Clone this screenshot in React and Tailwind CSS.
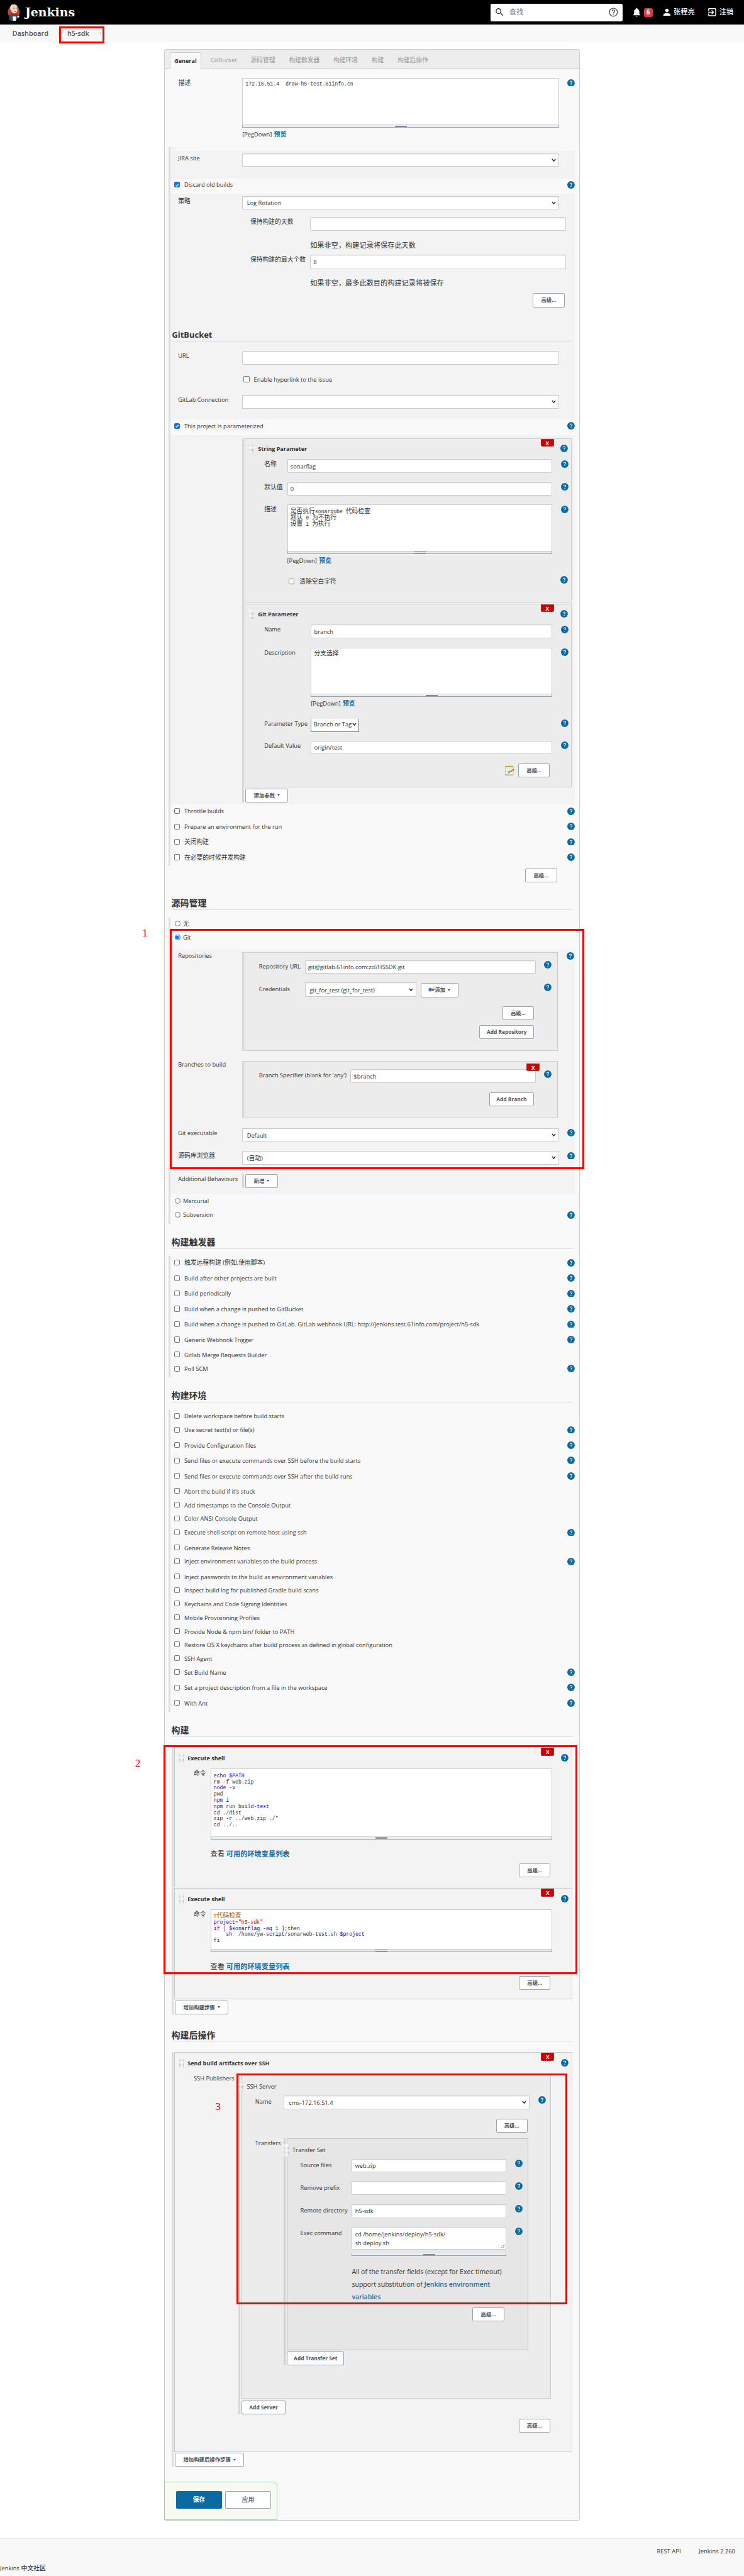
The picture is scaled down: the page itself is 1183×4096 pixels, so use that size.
import React from "react";
import { MdSearch, MdHelpOutline, MdNotifications, MdPerson, MdExitToApp } from "react-icons/md";

const hasCjk = (s) => /[\u4e00-\u9fff]/.test(s);

function Text({ children, className = "" }) {
  return (
    <span className={`${hasCjk(children) ? "text-[14px]" : "text-[13.3px]"} whitespace-nowrap leading-6 ${className}`}>
      {children}
    </span>
  );
}

function Help({ className = "" }) {
  return (
    <svg viewBox="0 0 17 17" className={`h-[17px] w-[17px] shrink-0 ${className}`}>
      <circle cx="8.5" cy="8.5" r="8.5" fill="#0b6aa2" />
      <path d="M6.1 6.6c0-1.5 1-2.4 2.4-2.4s2.4.9 2.4 2.1c0 1.7-2.3 1.9-2.3 3.7" fill="none" stroke="#fff" strokeWidth="1.5" />
      <rect x="7.8" y="11.3" width="1.6" height="1.7" fill="#fff" />
    </svg>
  );
}

function Check({ on, className = "" }) {
  return (
    <span
      className={`flex h-[13px] w-[13px] shrink-0 items-center justify-center rounded-[2.5px] border ${on ? "border-[#0075ff] bg-[#0075ff]" : "border-[#767676] bg-white"} ${className}`}
    >
      {on && (
        <svg viewBox="0 0 12 12" className="h-[12px] w-[12px]">
          <path d="M2 6.2l2.8 2.9L10 2.8" fill="none" stroke="#fff" strokeWidth="2" />
        </svg>
      )}
    </span>
  );
}

function CheckRow({ label, help, on, className = "" }) {
  return (
    <div className={`flex w-[920px] items-start pl-[9px] ${help ? "h-[35px]" : "h-[31px]"} ${className}`}>
      <Check on={on} className={help ? "mt-[8px]" : "mt-[7px]"} />
      <Text className="mt-[4px] ml-[10px]">{label}</Text>
      {help && <Help className="mt-[6px] mr-px ml-auto" />}
    </div>
  );
}

function RadioRow({ label, help, on }) {
  return (
    <div className={`flex w-[920px] items-start pl-[10px] ${help ? "h-[35px]" : "h-[31px]"}`}>
      <span className={`mt-[8px] flex h-[13px] w-[13px] shrink-0 items-center justify-center rounded-full border bg-white ${on ? "border-[#0075ff]" : "border-[#767676]"}`}>
        {on && <span className="h-[8px] w-[8px] rounded-full bg-[#0075ff]" />}
      </span>
      <Text className="mt-[4px] ml-[6px]">{label}</Text>
      {help && <Help className="mt-[7px] mr-px ml-auto" />}
    </div>
  );
}

function Label({ children, className = "" }) {
  return (
    <div className={`shrink-0 leading-6 ${className}`}>
      <Text className="block">{children}</Text>
    </div>
  );
}

function Input({ children, className = "" }) {
  return (
    <div className={`flex h-[31px] shrink-0 items-center rounded-[3px] border border-[#ccc] bg-white pt-[3px] pl-[6px] shadow-[inset_0_1px_1px_rgba(0,0,0,0.08)] ${className}`}>
      {children && <Text>{children}</Text>}
    </div>
  );
}

function Chevron({ className = "" }) {
  return (
    <svg viewBox="0 0 10 8" className={`h-[8px] w-[10px] ${className}`}>
      <path d="M1.2 1.2L5 6l3.8-4.8" fill="none" stroke="#222" strokeWidth="2" />
    </svg>
  );
}

function Select({ children, className = "" }) {
  return (
    <div className={`flex h-[31px] shrink-0 items-center justify-between border border-[#ccc] bg-white pr-[5px] pl-[10px] shadow-[inset_0_1px_1px_rgba(0,0,0,0.08)] ${className}`}>
      <Text className="pt-[4px]">{children || ""}</Text>
      <Chevron />
    </div>
  );
}

function Btn({ children, className = "" }) {
  return (
    <div className={`flex h-[32px] shrink-0 items-center justify-center rounded-[3px] border-2 border-[#98a5ae] bg-white text-[12px] leading-none font-bold whitespace-nowrap text-[#4d545d] ${className}`}>
      {children}
    </div>
  );
}

function Caret() {
  return <span className="ml-[6px] border-x-4 border-t-[5px] border-x-transparent border-t-[#4d545d]" />;
}

function Grip({ className = "" }) {
  return (
    <div className={`flex h-[6px] flex-col items-center justify-center gap-[1px] border border-t-0 border-[#95a5b0] bg-[#e8eef1] ${className}`}>
      <span className="h-[1px] w-[27px] bg-[#889]" />
      <span className="h-[1px] w-[27px] bg-[#889]" />
    </div>
  );
}

function Area({ children, className = "" }) {
  return (
    <div>
      <div className={`overflow-hidden border border-[#ccc] bg-white pl-[6px] [font-family:'Liberation_Mono','Noto_Sans_CJK_SC',monospace] text-[11.67px] leading-[14px] whitespace-pre ${className}`}>
        {children}
      </div>
      <Grip />
    </div>
  );
}

function PegDown() {
  return (
    <div className="mt-[4px] flex h-6 gap-[5px] whitespace-nowrap leading-6">
      <span className="text-[13.3px]">[PegDown]</span>
      <span className="text-[14px] font-bold text-[#0b6aa2]">预览</span>
    </div>
  );
}

function Heading({ children, className = "" }) {
  return (
    <div className={`h-[27px] border-b border-[#ddd] leading-6 font-bold text-[#333] ${hasCjk(children) ? "text-[20px]" : "text-[18.5px]"} ${className}`}>
      {children}
    </div>
  );
}

function Handle({ className = "" }) {
  return (
    <svg className={`w-[12px] shrink-0 ${className}`}>
      <defs>
        <pattern id="grip-dots" width="3" height="3" patternUnits="userSpaceOnUse">
          <rect width="3" height="3" fill="#f7f7f7" />
          <rect x="1" y="1" width="1.4" height="1.4" fill="#aaa" />
        </pattern>
      </defs>
      <rect width="12" height="100%" fill="url(#grip-dots)" />
    </svg>
  );
}

function CloseX({ className = "" }) {
  return (
    <div className={`h-[18px] w-[30px] rounded-b-[3px] border border-[#a33] bg-[#c00] text-center text-[12px] leading-[17px] font-bold text-white ${className}`}>
      X
    </div>
  );
}

function CardHead({ title }) {
  return (
    <div className="flex h-[47px] items-start">
      <Handle className="mt-[13px] ml-[9px] h-[21px]" />
      <span className="mt-[12px] ml-[8px] text-[13px] leading-6 font-bold whitespace-nowrap">{title}</span>
      <CloseX className="ml-auto" />
      <Help className="mt-[14px] mr-[7px] ml-[15px]" />
    </div>
  );
}

const Cmd = ({ children }) => <span className="text-[#3300aa]">{children}</span>;
const Var = ({ children }) => <span className="text-[#0000e0]">{children}</span>;

function EnvLink() {
  return (
    <div className="mt-[21px] text-[16px] leading-6 whitespace-nowrap">
      查看 <span className="font-bold text-[#0b6aa2]">可用的环境变量列表</span>
    </div>
  );
}

const triggers = [
  ["触发远程构建 (例如,使用脚本)", true],
  ["Build after other projects are built", true],
  ["Build periodically", true],
  ["Build when a change is pushed to GitBucket", true],
  ["Build when a change is pushed to GitLab. GitLab webhook URL: http://jenkins.test.61info.com/project/h5-sdk", true],
  ["Generic Webhook Trigger", true],
  ["Gitlab Merge Requests Builder", false],
  ["Poll SCM", true],
];

const environment = [
  ["Delete workspace before build starts", false],
  ["Use secret text(s) or file(s)", true],
  ["Provide Configuration files", true],
  ["Send files or execute commands over SSH before the build starts", true],
  ["Send files or execute commands over SSH after the build runs", true],
  ["Abort the build if it's stuck", false],
  ["Add timestamps to the Console Output", false],
  ["Color ANSI Console Output", false],
  ["Execute shell script on remote host using ssh", true],
  ["Generate Release Notes", false],
  ["Inject environment variables to the build process", true],
  ["Inject passwords to the build as environment variables", false],
  ["Inspect build log for published Gradle build scans", false],
  ["Keychains and Code Signing Identities", false],
  ["Mobile Provisioning Profiles", false],
  ["Provide Node & npm bin/ folder to PATH", false],
  ["Restore OS X keychains after build process as defined in global configuration", false],
  ["SSH Agent", false],
  ["Set Build Name", true],
  ["Set a project description from a file in the workspace", true],
  ["With Ant", true],
];

function Butler() {
  return (
    <svg viewBox="0 0 28 39" className="h-[39px] w-[28px]">
      <ellipse cx="14" cy="19" rx="13.5" ry="15" fill="#d33833" />
      <path d="M5 38c-2-6-2-12 2-16l6 3 7-3c4 2 6 6 6 10l-4 1-2 4-6 2z" fill="#335061" />
      <path d="M7 12C5 5 10 1 15 1s9 4 8 11c0 5-1 8-4 10s-7 1-9-2-2-4-3-8z" fill="#f0d6b7" stroke="#222" strokeWidth=".8" />
      <path d="M6.500 14C4 7 8 1 13 1c-3 2-4 5-3.500 9L9 15z" fill="#dfd8cf" />
      <path d="M13 10h3M18.500 10h3M15 17q3 1.500 5 0" stroke="#333" strokeWidth="1.100" fill="none" />
      <path d="M12 21l5 2 5-2v5l-5-2-5 2z" fill="#d33833" stroke="#7a1512" strokeWidth=".6" />
      <path d="M11.500 29h8l-.8 10h-6z" fill="#fff" />
      <path d="M22 27h5l-1 4h-4z" fill="#ddd" />
    </svg>
  );
}

function Header() {
  return (
    <>
      <div className="flex h-[56px] items-center bg-black pl-[17px] text-white">
        <Butler />
        <span className="ml-[12px] [font-family:'DejaVu_Serif',serif] text-[27px] leading-none font-bold">Jenkins</span>
        <div className="ml-auto flex h-[40px] w-[300px] items-center rounded-[4px] bg-white pr-[9px] pl-[8px]">
          <MdSearch className="h-[24px] w-[24px] text-[#333]" />
          <span className="ml-[11px] text-[16px] text-[#757575]">查找</span>
          <MdHelpOutline className="ml-auto h-[24px] w-[24px] text-[#4d545d]" />
        </div>
        <MdNotifications className="ml-[20px] h-[24px] w-[24px]" />
        <span className="ml-[4px] h-[20px] w-[20px] rounded-[4px] bg-[#dc3545] text-center text-[14px] leading-[20px] font-bold">6</span>
        <MdPerson className="ml-[21px] h-[24px] w-[24px]" />
        <span className="ml-[3px] w-[48px] text-[16px] font-medium whitespace-nowrap">张程亮</span>
        <MdExitToApp className="ml-[28px] h-[24px] w-[24px]" />
        <span className="mr-[24px] ml-[4px] w-[32px] text-[16px] font-medium whitespace-nowrap">注销</span>
      </div>
      <div className="flex h-[40px] items-center bg-[#f8f8f8] pl-[28px] text-[15.5px] font-semibold text-[#4d545d]">
        <span className="w-[81px]">Dashboard</span>
        <span className="ml-[24px] border-y-4 border-l-4 border-y-transparent border-l-[#bbb]" />
        <span className="ml-[17px] w-[51px]">h5-sdk</span>
        <span className="ml-[24px] border-y-4 border-l-4 border-y-transparent border-l-[#bbb]" />
      </div>
    </>
  );
}

function Tabs() {
  return (
    <div className="flex h-[45px] items-end border-b border-[#ccc] bg-[#ededed] pl-[11px] leading-[38px] text-[#999]">
      <span className="-mb-px flex h-[38px] w-[72px] justify-center rounded-t-[4px] border border-b-0 border-[#ccc] bg-[#f9f9f9] text-[13px] font-bold text-[#333]">
        General
      </span>
      <span className="ml-[21px] w-[61px] text-[13.3px]">GitBucket</span>
      <div className="flex gap-[31px] pl-[30px] text-[14px]">
        <span>源码管理</span>
        <span>构建触发器</span>
        <span>构建环境</span>
        <span>构建</span>
        <span>构建后操作</span>
      </div>
    </div>
  );
}

function LogRotation() {
  return (
    <div className="h-[513px] w-[920px] bg-[#f3f3f3] pt-[5px]">
      <div className="flex h-[47px] items-start pl-[18px]">
        <Label className="w-[145px]">策略</Label>
        <Select className="w-[720px]">Log Rotation</Select>
      </div>
      <div className="flex h-[87px] items-start pl-[182px]">
        <Label className="w-[136px]">保持构建的天数</Label>
        <div>
          <Input className="h-[32px] w-[582px]" />
          <div className="mt-[21px] text-[16px] leading-6">如果非空，构建记录将保存此天数</div>
        </div>
      </div>
      <div className="flex h-[87px] items-start pl-[182px]">
        <Label className="w-[136px]">保持构建的最大个数</Label>
        <div>
          <Input className="h-[32px] w-[582px]">8</Input>
          <div className="mt-[21px] text-[16px] leading-6">如果非空，最多此数目的构建记录将被保存</div>
        </div>
      </div>
      <div className="flex h-[82px] justify-end pr-[24px]">
        <Btn className="w-[72px]">高级...</Btn>
      </div>
      <Heading className="ml-[4px] w-[911px]">GitBucket</Heading>
      <div className="mt-[22px] flex h-[55px] items-start pl-[18px]">
        <Label className="w-[145px]">URL</Label>
        <Input className="w-[720px]" />
      </div>
      <div className="flex h-[45px] items-start pl-[167px]">
        <Check className="mt-[3px]" />
        <Text className="ml-[10px]">Enable hyperlink to the issue</Text>
      </div>
      <div className="flex h-[31px] items-start pl-[18px]">
        <Label className="w-[145px]">GitLab Connection</Label>
        <Select className="w-[720px]" />
      </div>
    </div>
  );
}

function ParamRow({ label, wide, children, className = "" }) {
  return (
    <div className={`flex items-start pl-[43px] ${className}`}>
      <Label className={wide ? "w-[106px]" : "w-[52px]"}>{label}</Label>
      <div className={wide ? "w-[548px]" : "w-[602px]"}>{children}</div>
      <Help className="mt-[2px] ml-[20px]" />
    </div>
  );
}

function Notepad() {
  return (
    <svg viewBox="0 0 24 24" className="h-[24px] w-[24px]">
      <rect x="2" y="2" width="18" height="20" fill="#fafafa" stroke="#aaa" />
      <rect x="2" y="1" width="18" height="3.5" fill="#c9ad3a" />
      <path d="M5 8h12M5 11h12M5 14h8" stroke="#bbb" strokeWidth="1.200" />
      <path d="M8 18.500l1.500-3.500 9.500-6 1.500 2.200-9.500 6z" fill="#e8a33a" stroke="#8a5a1a" strokeWidth=".7" />
      <path d="M19 9l2-1.200 1.500 2.200-2 1.200z" fill="#d0402b" />
      <rect x="2" y="20.500" width="18" height="2" fill="#aaa" />
    </svg>
  );
}

function Parameters() {
  return (
    <div className="h-[840px] w-[920px] bg-[#f3f3f3] pt-[7px] pl-[163px]">
      <div className="flex h-[828px] flex-col border-l-[5px] border-[#d8d8d8] pl-[2px]">
        <div className="h-[374px] w-[743px] shrink-0 border border-[#ccc] bg-[#ececec]">
          <CardHead title="String Parameter" />
          <ParamRow label="名称" className="h-[52px]"><Input>sonarflag</Input></ParamRow>
          <ParamRow label="默认值" className="h-[51px]"><Input>0</Input></ParamRow>
          <ParamRow label="描述" className="h-[161px]">
            <Area className="h-[106px] pt-[8px]">
              <span className="text-[14px]">是否执行</span>sonarqube <span className="text-[14px]">代码检查</span>{"\n"}
              <span className="text-[14px]">默认</span> 0 <span className="text-[14px]">为不执行</span>{"\n"}
              <span className="text-[14px]">设置</span> 1 <span className="text-[14px]">为执行</span>
            </Area>
            <PegDown />
          </ParamRow>
          <div className="flex items-start pl-[99px]">
            <Check className="mt-[7px]" />
            <Text className="mt-[3px] ml-[11px]">清除空白字符</Text>
            <Help className="mt-[1px] mr-[7px] ml-auto" />
          </div>
        </div>
        <div className="mt-[2px] h-[418px] w-[743px] shrink-0 border border-[#ccc] bg-[#ececec]">
          <CardHead title="Git Parameter" />
          <ParamRow wide label="Name" className="h-[52px]"><Input>branch</Input></ParamRow>
          <ParamRow wide label="Description" className="h-[161px]">
            <Area className="h-[106px] pt-[6px]"><span className="text-[14px]">分支选择</span></Area>
            <PegDown />
          </ParamRow>
          <ParamRow wide label="Parameter Type" className="h-[50px]">
            <div className="flex h-[30px] w-[109px] items-center justify-between border border-t-0 border-[#767676] bg-white pr-[4px] pl-[5px]">
              <Text>Branch or Tag</Text>
              <Chevron className="-mt-[2px]" />
            </div>
          </ParamRow>
          <ParamRow wide label="Default Value" className="h-[52px]"><Input>origin/test</Input></ParamRow>
          <div className="flex justify-end gap-[8px] pr-[48px]">
            <div className="pt-[4px]"><Notepad /></div>
            <Btn className="w-[72px]">高级...</Btn>
          </div>
        </div>
        <Btn className="mt-[2px] ml-[2px] w-[97px]">添加参数<Caret /></Btn>
      </div>
    </div>
  );
}

function KeyIcon() {
  return (
    <svg viewBox="0 0 16 16" className="h-[15px] w-[15px]">
      <path d="M1 6c0-2 1.500-3 3.500-3 2 0 3 1 3.500 2h7v3h-2v2h-3V9H8c-.5 1.500-1.500 2-3.500 2C2 11 1 9 1 6z" fill="#4f7cae" stroke="#35618f" strokeWidth=".7" />
      <circle cx="12.500" cy="3.500" r="2.500" fill="#f5e04a" />
    </svg>
  );
}

function GitBlock() {
  return (
    <>
      <div className="h-[10px] w-[13px] bg-[#f3f3f3]" />
      <div className="h-[558px] w-[920px] bg-[#f3f3f3] pt-[7px] pl-[18px]">
        <div className="flex h-[248px] items-start">
          <Label className="-mt-[3px] w-[145px]">Repositories</Label>
          <div className="h-[224px] border-l-[5px] border-[#d8d8d8] pl-[2px]">
            <div className="h-full w-[711px] border border-[#ccc] bg-[#ececec] pt-[17px] pl-[31px]">
              <div className="flex h-[51px] w-[665px] items-start">
                <Label className="w-[104px] pt-[3px]">Repository URL</Label>
                <Input className="w-[525px]">git@gitlab.61info.com:zcl/H5SDK.git</Input>
                <Help className="mt-[2px] ml-auto" />
              </div>
              <div className="flex h-[53px] w-[665px] items-start">
                <Label className="w-[104px] pt-[3px]">Credentials</Label>
                <Select className="h-[32px] w-[253px]">git_for_test (git_for_test)</Select>
                <Btn className="mt-px ml-[10px] w-[86px]"><KeyIcon />添加<Caret /></Btn>
                <Help className="mt-[2px] ml-auto" />
              </div>
              <div className="flex w-[625px] flex-col items-end gap-[11px]">
                <Btn className="w-[72px]">高级...</Btn>
                <Btn className="w-[124px]">Add Repository</Btn>
              </div>
            </div>
          </div>
          <Help className="ml-[21px]" />
        </div>
        <div className="flex h-[152px] items-start">
          <Label className="-mt-[3px] w-[145px]">Branches to build</Label>
          <div className="h-[130px] border-l-[5px] border-[#d8d8d8] pl-[2px]">
            <div className="h-full w-[711px] border border-[#ccc] bg-[#ececec] pt-[17px] pl-[31px]">
              <div className="relative flex h-[52px] w-[665px] items-start">
                <Label className="w-[208px] pt-[3px]">Branch Specifier (blank for 'any')</Label>
                <Input className="w-[421px]">$branch</Input>
                <CloseX className="absolute -top-[14px] left-[608px]" />
                <Help className="mt-[2px] ml-auto" />
              </div>
              <div className="flex w-[625px] justify-end">
                <Btn className="w-[102px]">Add Branch</Btn>
              </div>
            </div>
          </div>
        </div>
        <div className="flex h-[52px] items-start">
          <Label className="w-[145px]">Git executable</Label>
          <Select className="w-[720px]">Default</Select>
          <Help className="mt-[2px] ml-[19px]" />
        </div>
        <div className="flex h-[52px] items-start">
          <Label className="w-[145px]">源码库浏览器</Label>
          <Select className="w-[720px]">(自动)</Select>
          <Help className="mt-[2px] ml-[19px]" />
        </div>
        <div className="flex items-start">
          <Label className="w-[145px]">Additional Behaviours</Label>
          <div className="border-l-[5px] border-[#d8d8d8] pl-[4px]">
            <Btn className="w-[73px]">新增<Caret /></Btn>
          </div>
        </div>
      </div>
    </>
  );
}

function Build() {
  return (
    <div className="mt-[24px] ml-[15px] h-[607px] border-l-[5px] border-[#ddd] pl-[2px]">
      <div className="h-[318px] w-[904px] border border-[#ccc] bg-[#f3f3f3]">
        <CardHead title="Execute shell" />
        <div className="flex items-start pl-[43px]">
          <Label className="w-[38px]">命令</Label>
          <div className="w-[777px]">
            <Area className="h-[155px] pt-[8px]">
              <Cmd>echo</Cmd> <Var>$PATH</Var>{"\n"}
              <Cmd>rm</Cmd> <Var>-f</Var> web.zip{"\n"}
              <Cmd>node</Cmd> <Var>-v</Var>{"\n"}
              pwd{"\n"}
              <Cmd>npm</Cmd> i{"\n"}
              <Cmd>npm</Cmd> run build<Var>-test</Var>{"\n"}
              <Cmd>cd</Cmd> ./dist{"\n"}
              zip <Var>-r</Var> ../web.zip ./*{"\n"}
              <Cmd>cd</Cmd> ../..
            </Area>
            <EnvLink />
            <div className="mt-[9px] flex justify-end pr-[4px]"><Btn className="w-[72px]">高级...</Btn></div>
          </div>
        </div>
      </div>
      <div className="mt-[2px] h-[253px] w-[904px] border border-[#ccc] bg-[#f3f3f3]">
        <CardHead title="Execute shell" />
        <div className="flex items-start pl-[43px]">
          <Label className="w-[38px]">命令</Label>
          <div className="w-[777px]">
            <Area className="h-[91px] pt-[7px]">
              <span className="text-[#a50]">#<span className="text-[14px]">代码检查</span></span>{"\n"}
              <Var>project</Var>=<span className="text-[#a11]">"h5-sdk"</span>{"\n"}
              <span className="text-[#708]">if</span> [ <Var>$sonarflag</Var> <Var>-eq</Var> <span className="text-[#164]">1</span> ];then{"\n"}
              {"    "}<Cmd>sh</Cmd>{"  "}/home/yw<Var>-script</Var>/sonarweb<Var>-test</Var>.sh <Var>$project</Var>{"\n"}
              <span className="text-[#708]">fi</span>
            </Area>
            <EnvLink />
            <div className="mt-[9px] flex justify-end pr-[4px]"><Btn className="w-[72px]">高级...</Btn></div>
          </div>
        </div>
      </div>
      <Btn className="mt-[2px] ml-[2px] w-[121px]">增加构建步骤<Caret /></Btn>
    </div>
  );
}

function TransferRow({ label, children, className = "" }) {
  return (
    <div className={`flex items-start pl-[30px] ${className}`}>
      <Label className="w-[117px] pt-[3px]">{label}</Label>
      <div className="w-[351px]">{children}</div>
      <Help className="mt-[2px] ml-[20px]" />
    </div>
  );
}

function TransferSet() {
  return (
    <div className="h-[482px] w-[549px] border border-[#c4c4c4] bg-[#e6e6e6]">
      <div className="flex h-[46px] items-start">
        <Handle className="mt-[12px] -ml-[8px] h-[29px]" />
        <Text className="mt-[15px] ml-[8px]">Transfer Set</Text>
      </div>
      <TransferRow label="Source files" className="h-[51px]"><Input>web.zip</Input></TransferRow>
      <TransferRow label="Remove prefix" className="h-[52px]"><Input /></TransferRow>
      <TransferRow label="Remote directory" className="h-[51px]"><Input>h5-sdk</Input></TransferRow>
      <TransferRow label="Exec command" className="h-[183px]">
        <div className="flex h-[52px] justify-between rounded-[3px] border border-[#ccc] bg-white pt-[7px] pl-[6px] text-[13.3px] leading-[19px]">
          <div>cd /home/jenkins/deploy/h5-sdk/<br />sh deploy.sh</div>
          <svg viewBox="0 0 10 10" className="mr-px mb-px h-[10px] w-[10px] self-end">
            <path d="M1 9l8-8M5 9l4-4" stroke="#555" strokeWidth="1" />
          </svg>
        </div>
        <Grip className="mt-[9px] h-[5px]" />
        <div className="mt-[22px] text-[15px] leading-[28.5px] whitespace-nowrap">
          All of the transfer fields (except for Exec timeout)<br />
          support substitution of <span className="font-semibold text-[#1f6a9e]">Jenkins environment<br />variables</span>
        </div>
      </TransferRow>
      <div className="flex justify-end pr-[53px]"><Btn className="w-[72px]">高级...</Btn></div>
    </div>
  );
}

function PostBuild() {
  return (
    <div className="mt-[24px] ml-[15px] h-[942px] border-l-[5px] border-[#ddd] pl-[2px]">
      <div className="h-[908px] w-[904px] border border-[#ccc] bg-[#f3f3f3]">
        <CardHead title="Send build artifacts over SSH" />
        <div className="flex h-[784px] items-start pl-[43px]">
          <Label className="w-[101px]">SSH Publishers</Label>
          <div className="mt-[2px] h-[773px] border-l-[5px] border-[#d8d8d8] pl-[2px]">
            <div className="h-[737px] w-[705px] border border-[#ccc] bg-[#ececec]">
              <div className="flex h-[46px] items-start">
                <Handle className="mt-[12px] -ml-[8px] h-[29px]" />
                <Text className="mt-[15px] ml-[8px]">SSH Server</Text>
              </div>
              <div className="flex h-[53px] items-start pl-[31px]">
                <Label className="w-[65px] pt-[3px]">Name</Label>
                <Select className="h-[32px] w-[558px]">cms-172.16.51.4</Select>
                <Help className="mt-[2px] ml-[20px]" />
              </div>
              <div className="flex h-[44px] w-[650px] justify-end"><Btn className="w-[72px]">高级...</Btn></div>
              <div className="flex items-start pl-[31px]">
                <Label className="mt-px w-[65px]">Transfers</Label>
                <div className="border-l-[5px] border-[#d0d0d0] pl-[2px]">
                  <TransferSet />
                  <Btn className="mt-[3px] ml-px w-[130px]">Add Transfer Set</Btn>
                </div>
              </div>
            </div>
            <Btn className="mt-[4px] ml-[2px] w-[99px]">Add Server</Btn>
          </div>
        </div>
        <div className="flex justify-end pr-[48px]"><Btn className="w-[72px]">高级...</Btn></div>
      </div>
      <Btn className="mt-[2px] ml-[2px] w-[157px]">增加构建后操作步骤<Caret /></Btn>
    </div>
  );
}

const bar = "ml-[8px] border-l-[5px] border-[#ddd]";
const mark = "absolute border-[4.3px] border-[#f00]";
const digit = "absolute [font-family:'Liberation_Serif',serif] text-[25px] leading-none text-[#f00]";

export default function App() {
  return (
    <div className="relative h-[5853px] w-full overflow-hidden bg-white [font-family:'Open_Sans','Noto_Sans_CJK_SC',sans-serif] text-[#333] [zoom:0.6998]">
      <Header />
      <div className="mt-[15px] ml-[373px] h-[5617px] w-[944px] rounded-[4px] border border-[#ccc] bg-[#f9f9f9]">
        <Tabs />
        <div className="flex h-[176px] items-start pt-[20px] pl-[31px]">
          <Label className="w-[145px]">描述</Label>
          <div className="w-[720px]">
            <Area className="h-[107px] pt-[6px]">172.16.51.4  draw-h5-test.61info.cn</Area>
            <PegDown />
          </div>
          <Help className="mt-[2px] ml-[19px]" />
        </div>

        <div className={`${bar} h-[1634px]`}>
          <div className="h-[10px] w-[13px] bg-[#f3f3f3]" />
          <div className="flex h-[62px] w-[920px] items-start bg-[#f3f3f3] pt-[5px] pl-[18px]">
            <Label className="w-[145px]">JIRA site</Label>
            <Select className="w-[720px]" />
          </div>
          <CheckRow on help label="Discard old builds" />
          <LogRotation />
          <CheckRow on help label="This project is parameterized" />
          <Parameters />
          <CheckRow help label="Throttle builds" />
          <CheckRow help label="Prepare an environment for the run" />
          <CheckRow help label="关闭构建" />
          <CheckRow help label="在必要的时候并发构建" />
        </div>
        <div className="mt-[6px] flex justify-end pr-[50px]"><Btn className="w-[72px]">高级...</Btn></div>

        <Heading className="mt-[35px] ml-[15px] w-[913px]">源码管理</Heading>
        <div className={`${bar} mt-[17px] h-[696px]`}>
          <RadioRow label="无" />
          <RadioRow on label="Git" />
          <GitBlock />
          <RadioRow label="Mercurial" />
          <RadioRow help label="Subversion" />
        </div>

        <Heading className="mt-[30px] ml-[15px] w-[913px]">构建触发器</Heading>
        <div className={`${bar} mt-[17px] h-[275px]`}>
          {triggers.map(([label, help]) => <CheckRow key={label} label={label} help={help} />)}
        </div>

        <Heading className="mt-[30px] ml-[15px] w-[913px]">构建环境</Heading>
        <div className={`${bar} mt-[17px] h-[686px]`}>
          {environment.map(([label, help]) => <CheckRow key={label} label={label} help={help} />)}
        </div>

        <Heading className="mt-[30px] ml-[15px] w-[913px]">构建</Heading>
        <Build />

        <Heading className="mt-[35px] ml-[15px] w-[913px]">构建后操作</Heading>
        <PostBuild />

        <div className="mt-[34px] -ml-px flex h-[87px] w-[257px] gap-[8px] rounded-tr-[10px] border border-[#a9c9b6] bg-[#f8f9f0] pt-[20px] pl-[25px]">
          <div className="h-[40px] w-[104px] rounded-[3px] bg-[#0b6aa2] text-center text-[14px] leading-[40px] font-bold text-white">保存</div>
          <div className="h-[40px] w-[104px] rounded-[3px] border-2 border-[#98a5ae] bg-white text-center text-[14px] leading-[36px] font-medium text-[#4d545d]">应用</div>
        </div>
      </div>

      <div className="mt-[40px] flex h-[85px] flex-col border-t border-[#e8e8e8] bg-[#f8f8f8]">
        <div className="mt-[16px] flex justify-end gap-[41px] pr-[20px] text-[13.5px] leading-6">
          <span>REST API</span>
          <span>Jenkins 2.260</span>
        </div>
        <div className="mt-[15px] flex gap-[4px] leading-6">
          <span className="text-[13.3px]">Jenkins</span>
          <span className="text-[14px] font-medium">中文社区</span>
        </div>
      </div>

      {/* Red annotation marks drawn over the page */}
      <div className={`${mark} top-[60px] left-[135px] h-[39px] w-[102px]`} />
      <div className={`${mark} top-[2111px] left-[386px] h-[546px] w-[941px]`} />
      <div className={`${mark} top-[3966px] left-[371px] h-[519px] w-[941px]`} />
      <div className={`${mark} top-[4712px] left-[537px] h-[524px] w-[752px]`} />
      <span className={`${digit} top-[2108px] left-[323px]`}>1</span>
      <span className={`${digit} top-[3994px] left-[307px]`}>2</span>
      <span className={`${digit} top-[4774px] left-[489px]`}>3</span>
    </div>
  );
}
